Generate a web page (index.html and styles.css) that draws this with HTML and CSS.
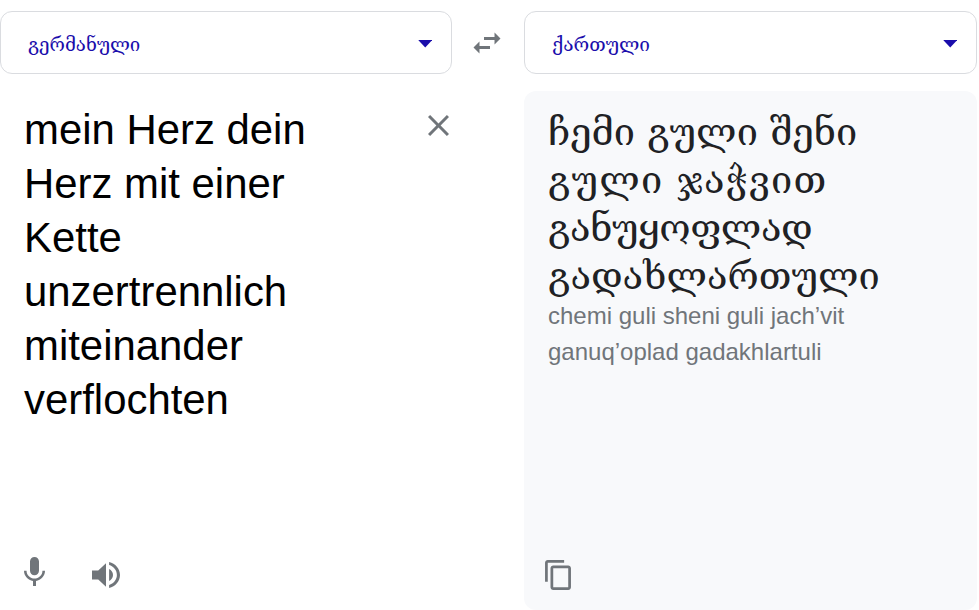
FILE: index.html
```html
<!DOCTYPE html>
<html lang="ka">
<head>
<meta charset="utf-8">
<title>თარგმანი</title>
<link rel="stylesheet" href="styles.css">
</head>
<body>
<main class="translator">
  <header class="languages">
    <button class="language"><span class="language-name">გერმანული</span><svg class="caret" viewBox="0 0 15 8"><path d="M0 0h15L7.500 8z"/></svg></button>
    <svg class="swap" viewBox="0 0 24 24"><path d="M6.990 11 3 15l3.990 4v-3H14v-2H6.990v-3zM21 9l-3.990-4v3H10v2h7.010v3L21 9z"/></svg>
    <button class="language"><span class="language-name target-name">ქართული</span><svg class="caret" viewBox="0 0 15 8"><path d="M0 0h15L7.500 8z"/></svg></button>
  </header>
  <div class="panels">
    <section class="source">
      <div class="source-body">
        <p class="source-text" lang="de">mein Herz dein<br>Herz mit einer<br>Kette<br>unzertrennlich<br>miteinander<br>verflochten</p>
        <svg class="close" viewBox="5 5 14 14"><path d="M19 6.410 17.590 5 12 10.590 6.410 5 5 6.410 10.590 12 5 17.590 6.410 19 12 13.410 17.590 19 19 17.590 13.410 12z"/></svg>
      </div>
      <div class="tools">
        <svg class="mic" viewBox="5 2 14 19" preserveAspectRatio="none"><path d="M12 14c1.660 0 2.990-1.340 2.990-3L15 5c0-1.660-1.340-3-3-3S9 3.340 9 5v6c0 1.660 1.340 3 3 3zm5.300-3c0 3-2.540 5.100-5.300 5.100S6.700 14 6.700 11H5c0 3.410 2.720 6.230 6 6.720V21h2v-3.280c3.280-.48 6-3.300 6-6.720h-1.700z"/></svg>
        <svg class="speaker" viewBox="3 3.230 18 17.540" preserveAspectRatio="none"><path d="M3 9v6h4l5 5V4L7 9H3zm13.500 3c0-1.770-1.020-3.290-2.500-4.030v8.050c1.480-.73 2.500-2.250 2.500-4.020zM14 3.230v2.060c2.890.86 5 3.540 5 6.710s-2.110 5.850-5 6.710v2.060c4.010-.91 7-4.490 7-8.770s-2.990-7.860-7-8.770z"/></svg>
      </div>
    </section>
    <section class="result">
      <div>
        <p class="result-text">ჩემი გული შენი<br><span class="loose">გული ჯაჭვით</span><br><span class="tight">განუყოფლად</span><br>გადახლართული</p>
        <p class="romanized">chemi guli sheni guli jach’vit<br>ganuq’oplad gadakhlartuli</p>
      </div>
      <svg class="copy" viewBox="2 1 19 22"><path d="M16 1H4c-1.100 0-2 .9-2 2v14h2V3h12V1zm3 4H8c-1.100 0-2 .9-2 2v14c0 1.100.9 2 2 2h11c1.100 0 2-.9 2-2V7c0-1.100-.9-2-2-2zm0 16H8V7h11v14z"/></svg>
    </section>
  </div>
</main>
</body>
</html>
```
FILE: styles.css
```css
* { box-sizing: border-box; }
body { margin: 0; background: #fff; color: #000; font-family: "Liberation Sans", "DejaVu Serif", sans-serif; overflow: hidden; }
p { margin: 0; }
svg { display: block; flex: none; fill: #70757a; }
.translator { width: 977px; height: 610px; padding-top: 11px; }
.languages { display: grid; grid-template-columns: 452px 72px 453px; align-items: center; }
.language { display: flex; align-items: center; justify-content: space-between; height: 63px; padding: 3px 19px 0 27px; border: 1px solid #dadce0; border-radius: 12px; background: #fff; color: #1a0dab; font: 18.7px "DejaVu Serif", serif; }
.target-name { font-size: 19.1px; }
.caret { width: 14.5px; height: 7.5px; fill: #1a0dab; }
.swap { width: 36px; height: 36px; margin-right: 2px; justify-self: center; }
.panels { display: grid; grid-template-columns: 452px 453px; column-gap: 72px; margin-top: 17px; height: 519px; }
.source, .result { display: flex; flex-direction: column; justify-content: space-between; }
.source { padding: 12px 3px 22px 24px; }
.source-body { display: flex; justify-content: space-between; }
.source-text { font-size: 41.9px; line-height: 54px; white-space: nowrap; }
.close { width: 21px; height: 21px; margin-top: 12px; }
.tools { display: flex; align-items: flex-end; gap: 47.5px; }
.mic { width: 21px; height: 29px; margin: 0 0 2px -.5px; }
.speaker { width: 28px; height: 26px; }
.result { padding: 17px 24px 20px; background: #f8f9fb; border-radius: 12px; }
.result-text { height: 190px; overflow: hidden; color: #202124; font: 38px/48px "DejaVu Serif", serif; white-space: nowrap; }
.loose { letter-spacing: 1.2px; }
.tight { letter-spacing: -.4px; }
.romanized { color: #70757a; font-size: 24px; line-height: 36px; white-space: nowrap; }
.copy { width: 26px; height: 30px; margin-left: -3px; }
```
